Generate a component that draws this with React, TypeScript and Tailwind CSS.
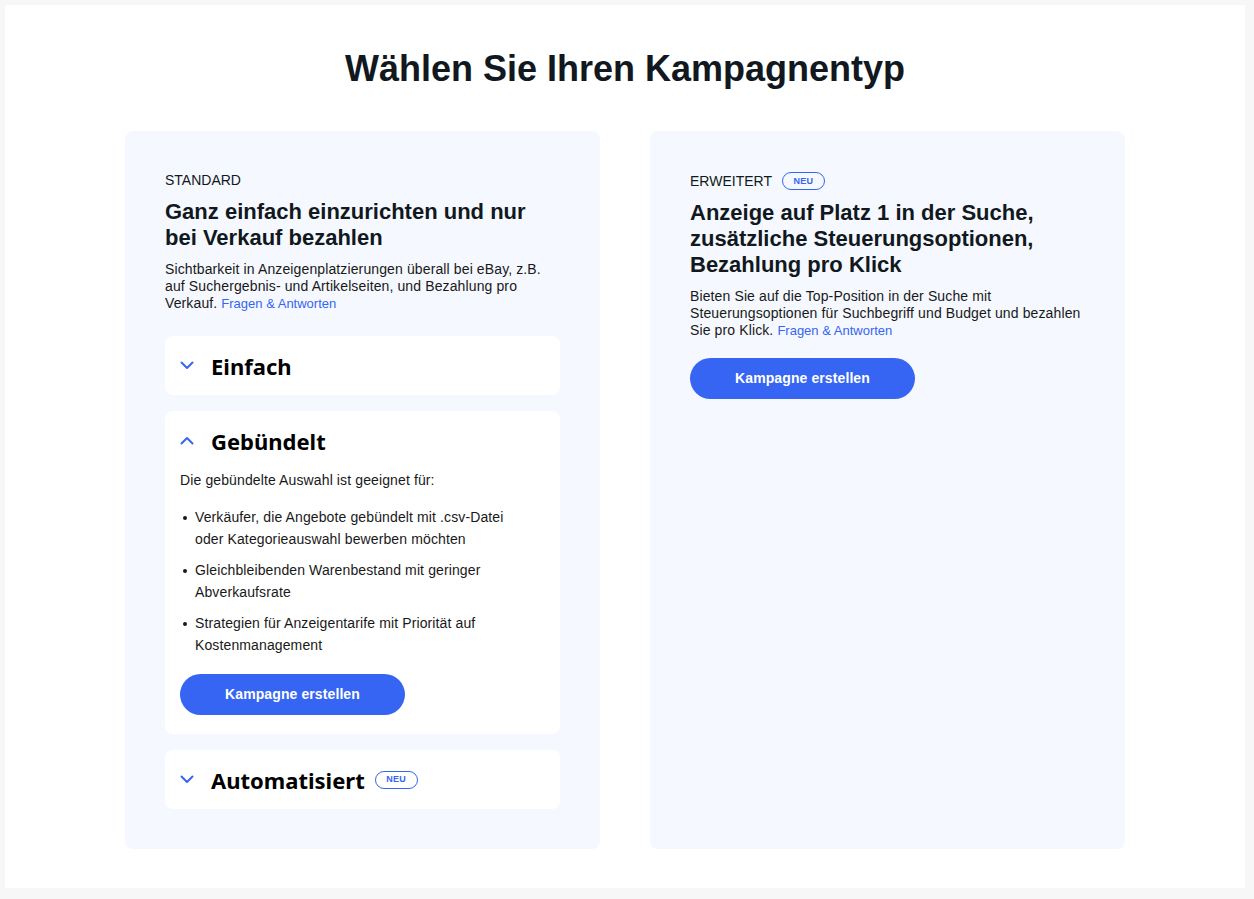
import { ReactNode } from 'react'

const sans = { fontFamily: '"Liberation Sans", Arial, sans-serif' }
const accFont = { fontFamily: '"Noto Sans", "Open Sans", sans-serif' }

function Chevron({ up }: { up?: boolean }) {
  return (
    <svg width="14" height="9" viewBox="0 0 14 9" fill="none" className="shrink-0">
      <path
        d={up ? 'M1.5 7.5 L7 2 L12.5 7.5' : 'M1.5 1.5 L7 7 L12.5 1.5'}
        stroke="#3665f3"
        strokeWidth="2"
        strokeLinecap="round"
        strokeLinejoin="round"
      />
    </svg>
  )
}

function NewBadge() {
  return (
    <span className="inline-flex items-center justify-center h-[18px] w-[43px] rounded-full border border-[#3665f3] text-[9px] font-bold tracking-[0.3px] text-[#3665f3] leading-none">
      NEU
    </span>
  )
}

function CreateButton() {
  return (
    <button className="h-[41px] w-[225px] rounded-full bg-[#3665f3] text-white text-[14px] font-bold tracking-[0.1px]">
      Kampagne erstellen
    </button>
  )
}

function AccordionHeader({ title, open, badge }: { title: string; open?: boolean; badge?: boolean }) {
  return (
    <div className="h-[59px] flex items-center">
      <Chevron up={open} />
      <span className="ml-[17px] text-[22px] font-bold text-black leading-none" style={accFont}>
        {title}
      </span>
      {badge && <span className="ml-[10px] flex"><NewBadge /></span>}
    </div>
  )
}

function Card({ children }: { children: ReactNode }) {
  return <div className="bg-[#f5f8fe] rounded-[8px] px-[40px] pt-[41px] pb-[40px]">{children}</div>
}

function Link() {
  return <a className="text-[13px] tracking-normal text-[#3665f3]">Fragen &amp; Antworten</a>
}

export default function App() {
  const items = [
    'Verkäufer, die Angebote gebündelt mit .csv-Datei oder Kategorieauswahl bewerben möchten',
    'Gleichbleibenden Warenbestand mit geringer Abverkaufsrate',
    'Strategien für Anzeigentarife mit Priorität auf Kostenmanagement',
  ]

  return (
    <div className="min-h-[899px] bg-[#f7f7f7] pt-[5px] pl-[5px]" style={sans}>
      <div className="w-[1240px] bg-white flex flex-col items-center pt-[42px] pb-[39px] text-[#111820]">
        <h1 className="text-[36px] leading-[44px] font-bold mb-[40px]">Wählen Sie Ihren Kampagnentyp</h1>

        <div className="grid grid-cols-[475px_475px] gap-[50px]">
          <Card>
            <div className="text-[14px] leading-[17px]">STANDARD</div>
            <h2 className="mt-[10px] text-[22px] leading-[26px] font-bold">
              Ganz einfach einzurichten und nur bei Verkauf bezahlen
            </h2>
            <p className="mt-[10px] text-[14px] leading-[17px] tracking-[0.12px] text-[#191919]">
              Sichtbarkeit in Anzeigenplatzierungen überall bei eBay, z.B. auf Suchergebnis- und Artikelseiten, und
              Bezahlung pro Verkauf. <Link />
            </p>

            <div className="mt-[24px] flex flex-col gap-[16px]">
              <div className="bg-white rounded-[8px] px-[15px]">
                <AccordionHeader title="Einfach" />
              </div>

              <div className="bg-white rounded-[8px] px-[15px] pb-[19px]">
                <AccordionHeader title="Gebündelt" open />
                <p className="text-[14px] leading-[20px] tracking-[0.12px] text-[#191919]">
                  Die gebündelte Auswahl ist geeignet für:
                </p>
                <ul className="mt-[17px] w-[345px] flex flex-col gap-[10px]">
                  {items.map((t) => (
                    <li key={t} className="flex text-[14px] leading-[21.5px] tracking-[0.12px] text-[#191919]">
                      <span className="w-[15px] shrink-0 flex pt-[9px]">
                        <span className="ml-[3px] w-[4px] h-[4px] rounded-full bg-[#191919]" />
                      </span>
                      <span>{t}</span>
                    </li>
                  ))}
                </ul>
                <div className="mt-[18px]">
                  <CreateButton />
                </div>
              </div>

              <div className="bg-white rounded-[8px] px-[15px]">
                <AccordionHeader title="Automatisiert" badge />
              </div>
            </div>
          </Card>

          <Card>
            <div className="flex items-center gap-[10px] text-[14px] leading-[17px]">
              <span>ERWEITERT</span>
              <NewBadge />
            </div>
            <h2 className="mt-[10px] text-[22px] leading-[26px] font-bold">
              Anzeige auf Platz 1 in der Suche, zusätzliche Steuerungsoptionen, Bezahlung pro Klick
            </h2>
            <p className="mt-[10px] text-[14px] leading-[17px] tracking-[0.12px] text-[#191919]">
              Bieten Sie auf die Top-Position in der Suche mit Steuerungsoptionen für Suchbegriff und Budget und
              bezahlen Sie pro Klick. <Link />
            </p>
            <div className="mt-[19px]">
              <CreateButton />
            </div>
          </Card>
        </div>
      </div>
    </div>
  )
}
